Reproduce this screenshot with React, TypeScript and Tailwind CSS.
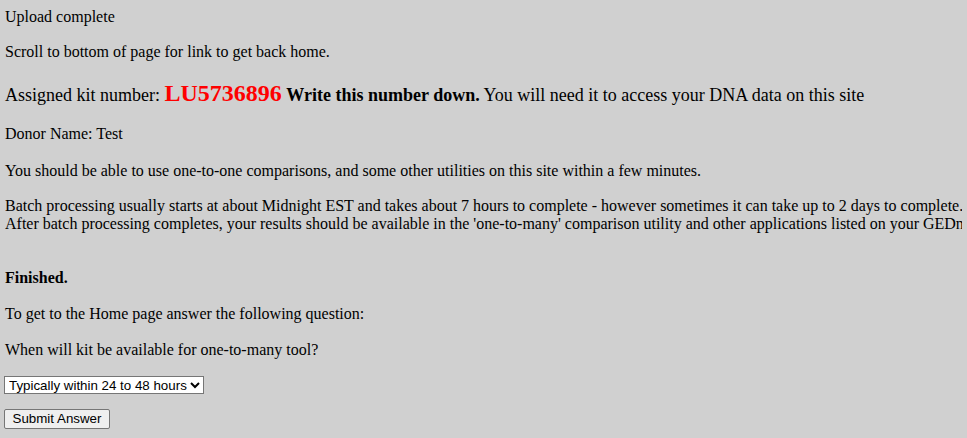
export default function App() {
  return (
    <div className="min-h-screen overflow-hidden bg-[#d0d0d0] px-[5px] pt-[8px] text-[16px] leading-[18px] text-black font-['Liberation_Serif',serif]">
      <div>Upload complete</div>
      <div className="mt-[17px]">Scroll to bottom of page for link to get back home.</div>

      <div className="mt-[20px] text-[18px] leading-[24px]">
        Assigned kit number:{" "}
        <span className="text-[24px] font-bold text-[#ff0000]">LU5736896</span>{" "}
        <span className="font-bold">Write this number down.</span> You will need it to access your DNA data on this site
      </div>

      <div className="mt-[18px]">Donor Name: Test</div>
      <div className="mt-[19px]">You should be able to use one-to-one comparisons, and some other utilities on this site within a few minutes.</div>

      <div className="mt-[17px] overflow-hidden whitespace-nowrap">
        <div>Batch processing usually starts at about Midnight EST and takes about 7 hours to complete - however sometimes it can take up to 2 days to complete.</div>
        <div>After batch processing completes, your results should be available in the 'one-to-many' comparison utility and other applications listed on your GEDmatch home page.</div>
      </div>

      <div className="mt-[36px] font-bold">Finished.</div>
      <div className="mt-[18px]">To get to the Home page answer the following question:</div>
      <div className="mt-[18px]">When will kit be available for one-to-many tool?</div>

      <div className="mt-[17px]">
        <select className="h-[18px] w-[200px] -ml-px border border-[#767676] bg-white text-[13.33px] leading-[16px] font-['Liberation_Sans',Arial,sans-serif] text-black">
          <option>Typically within 24 to 48 hours</option>
          <option>Immediately</option>
          <option>Never</option>
        </select>
      </div>

      <div className="mt-[15px]">
        <button className="h-[20px] w-[106px] -ml-px rounded-[2px] border border-[#767676] bg-[#efefef] text-[13.33px] font-['Liberation_Sans',Arial,sans-serif] text-black">
          Submit Answer
        </button>
      </div>
    </div>
  );
}
